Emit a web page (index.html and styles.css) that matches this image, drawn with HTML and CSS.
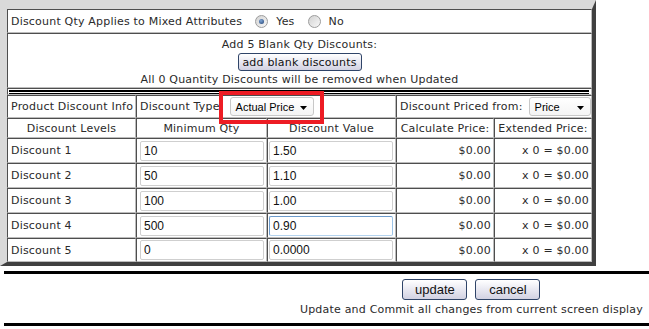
FILE: index.html
```html
<!DOCTYPE html>
<html>
<head>
<meta charset="utf-8">
<link rel="stylesheet" href="styles.css">
</head>
<body>
<div class="page">
  <div class="panel">
    <div class="grid">
      <div class="cell c-all row-mixed">
        <span class="lbl">Discount Qty Applies to Mixed Attributes</span>
        <span class="radio-opt"><span class="radio checked"></span>Yes</span>
        <span class="radio-opt"><span class="radio"></span>No</span>
      </div>
      <div class="cell c-all row-add">
        <div class="line">Add 5 Blank Qty Discounts:</div>
        <button class="btn btn-add">add blank discounts</button>
        <div class="line">All 0 Quantity Discounts will be removed when Updated</div>
      </div>
      <div class="cell c-all row-sep"><div class="dbl"></div></div>

      <div class="cell pl">Product Discount Info</div>
      <div class="cell span2 pl">Discount Type:
        <span class="select sel-type"><span>Actual Price</span><svg width="7" height="4" viewBox="0 0 7 4"><path d="M0 0H7L3.5 4Z" fill="#000"/></svg></span>
      </div>
      <div class="cell span2 pl">Discount Priced from:
        <span class="select sel-price"><span>Price</span><svg width="7" height="4" viewBox="0 0 7 4"><path d="M0 0H7L3.5 4Z" fill="#000"/></svg></span>
      </div>

      <div class="cell ctr">Discount Levels</div>
      <div class="cell ctr">Minimum Qty</div>
      <div class="cell ctr">Discount Value</div>
      <div class="cell ctr">Calculate Price:</div>
      <div class="cell ctr">Extended Price:</div>

      <div class="cell pl">Discount 1</div>
      <div class="cell qty"><input class="inp" type="text" value="10"></div>
      <div class="cell val"><input class="inp" type="text" value="1.50"></div>
      <div class="cell calc">$0.00</div>
      <div class="cell ext">x 0 = $0.00</div>

      <div class="cell pl">Discount 2</div>
      <div class="cell qty"><input class="inp" type="text" value="50"></div>
      <div class="cell val"><input class="inp" type="text" value="1.10"></div>
      <div class="cell calc">$0.00</div>
      <div class="cell ext">x 0 = $0.00</div>

      <div class="cell pl">Discount 3</div>
      <div class="cell qty"><input class="inp" type="text" value="100"></div>
      <div class="cell val"><input class="inp" type="text" value="1.00"></div>
      <div class="cell calc">$0.00</div>
      <div class="cell ext">x 0 = $0.00</div>

      <div class="cell pl">Discount 4</div>
      <div class="cell qty"><input class="inp" type="text" value="500"></div>
      <div class="cell val"><input class="inp focus" type="text" value="0.90"></div>
      <div class="cell calc">$0.00</div>
      <div class="cell ext">x 0 = $0.00</div>

      <div class="cell pl">Discount 5</div>
      <div class="cell qty"><input class="inp" type="text" value="0"></div>
      <div class="cell val"><input class="inp" type="text" value="0.0000"></div>
      <div class="cell calc">$0.00</div>
      <div class="cell ext">x 0 = $0.00</div>
    </div>
  </div>
  <div class="highlight"></div>
  <div class="footer">
    <div class="actions">
      <div class="btns">
        <button class="btn btn-act">update</button>
        <button class="btn btn-act">cancel</button>
      </div>
      <div class="note">Update and Commit all changes from current screen display</div>
    </div>
  </div>
</div>
</body>
</html>
```

FILE: styles.css
```css
html, body {
  margin: 0;
  padding: 0;
  background: #fff;
}
body {
  font-family: "DejaVu Sans", Verdana, sans-serif;
  font-size: 11px;
  letter-spacing: 0.2px;
  color: #2a2a2a;
}
.page {
  position: relative;
  width: 649px;
}
.panel {
  width: 596px;
  box-sizing: border-box;
  border-style: solid;
  border-width: 9px 4px 4px 7px;
  border-color: #d9d9d9 #404040 #404040 #d9d9d9;
}
.grid {
  display: grid;
  grid-template-columns: 129px 131px 129px 98px 98px;
  grid-template-rows: 24px 55px 7px 23px 20px 25px 25px 25px 25px 24px;
}
.cell {
  box-sizing: border-box;
  border: 1px solid;
  border-color: #4e4e4e #bcbcbc #bcbcbc #4e4e4e;
  display: flex;
  align-items: center;
  white-space: nowrap;
  min-width: 0;
}
.c-all { grid-column: 1 / 6; }
.span2 { grid-column: span 2; }
.pl { padding-left: 3px; }
.ctr { justify-content: center; }

.row-mixed { padding-left: 3px; }
.row-mixed .lbl { margin-right: 13px; }
.radio-opt {
  display: inline-flex;
  align-items: center;
  margin-right: 13px;
}
.radio {
  width: 11px;
  height: 11px;
  border-radius: 50%;
  border: 1px solid #9c9c9c;
  background: linear-gradient(135deg, #d2d2d2, #f8f8f8);
  margin-right: 8px;
  position: relative;
}
.radio.checked::after {
  content: "";
  position: absolute;
  left: 3px;
  top: 3px;
  width: 5px;
  height: 5px;
  border-radius: 50%;
  background: radial-gradient(circle at 40% 35%, #7fa6d6, #1f3f70);
}

.row-add {
  flex-direction: column;
  justify-content: flex-start;
  padding-top: 3px;
}
.row-add .line { line-height: 15px; }
.btn {
  box-sizing: border-box;
  border: 1px solid #2f4468;
  border-radius: 3px;
  background: linear-gradient(#ffffff, #e6e6f0 55%, #d2d2e2);
  color: #111;
  padding: 0;
  margin: 0;
}
.btn-add {
  font-family: "DejaVu Sans", Verdana, sans-serif;
  font-size: 11px;
  letter-spacing: 0.2px;
  width: 124px;
  height: 19px;
  margin: 1px 0 1px;
}

.row-sep { padding: 1px 2px 0 1px; align-items: flex-start; }
.dbl {
  width: 100%;
  height: 1px;
  border-top: 2px solid #000;
  border-bottom: 1px solid #000;
}

.select {
  box-sizing: border-box;
  display: inline-flex;
  align-items: center;
  justify-content: space-between;
  height: 19px;
  border: 1px solid #c8c8c8;
  border-radius: 3px;
  background: linear-gradient(#ffffff, #f4f4f4);
  font-family: "Liberation Sans", Arial, sans-serif;
  font-size: 11px;
  letter-spacing: 0;
  color: #000;
  padding: 0 6px 0 5px;
  margin-left: 6px;
}
.select svg { margin-top: 3px; }
.sel-type { width: 84px; }
.sel-price { width: 62px; }

.qty { padding-left: 3px; }
.val { padding-left: 1px; }
.inp {
  box-sizing: border-box;
  width: 124px;
  height: 20px;
  border: 1px solid #cfcfcf;
  border-radius: 2px;
  padding: 0 3px;
  margin: 0;
  font-family: "Liberation Sans", Arial, sans-serif;
  font-size: 12px;
  color: #111;
  background: #fff;
  outline: none;
}
.inp.focus { border-color: #6d9ccd #9cc3e6 #b4d3ee #6d9ccd; }
.calc { justify-content: flex-end; padding-right: 2px; }
.ext { justify-content: flex-end; padding-right: 2px; }

.highlight {
  position: absolute;
  left: 219px;
  top: 91px;
  width: 105px;
  height: 33px;
  box-sizing: border-box;
  border: 4px solid #ed1c24;
}

.footer {
  margin: 5px 0 0 4px;
  border-top: 3px solid #000;
  border-bottom: 3px solid #000;
  display: flex;
  justify-content: flex-end;
  padding: 5px 6px 6px 0;
}
.actions {
  display: flex;
  flex-direction: column;
  align-items: center;
}
.btns {
  display: flex;
  gap: 8px;
}
.btn-act {
  font-family: "Liberation Sans", Arial, sans-serif;
  font-size: 13px;
  letter-spacing: 0;
  width: 65px;
  height: 21px;
}
.note {
  line-height: 15px;
  margin-top: 2px;
}
```
